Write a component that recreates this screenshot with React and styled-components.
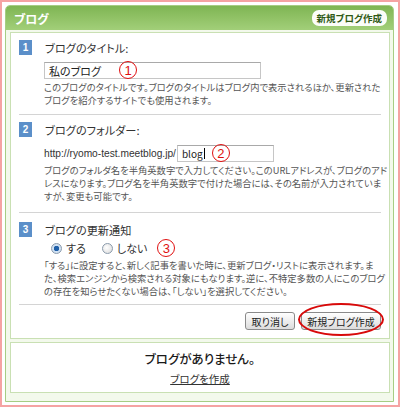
import React from "react";
import styled, { createGlobalStyle } from "styled-components";

const Global = createGlobalStyle`
  html, body { margin: 0; padding: 0; background: #ffffff; }
  body {
    font-family: "Noto Sans CJK JP", "Liberation Sans", sans-serif;
    font-feature-settings: "palt";
  }
`;

const Frame = styled.div`
  box-sizing: border-box;
  width: 400px;
  height: 407px;
  border: 2px solid #f5a3a3;
  padding: 3px 4px 3px 3px;
  background: #ffffff;
`;

const Panel = styled.div`
  box-sizing: border-box;
  height: 100%;
  border: 1px solid #a6cd84;
  border-radius: 5px 5px 0 0;
  background: #f3f9ec;
  display: flex;
  flex-direction: column;
`;

const Header = styled.div`
  height: 24px;
  display: flex;
  align-items: center;
  justify-content: space-between;
  padding: 0 6px 0 8px;
  border-radius: 4px 4px 0 0;
  background: linear-gradient(#7fb553, #a2cf79);
`;

const Title = styled.span`
  color: #ffffff;
  font-size: 12px;
  font-weight: 700;
`;

const HeaderButton = styled.span`
  background: #fbfdf8;
  border-radius: 7px;
  padding: 1px 5px;
  font-size: 9.5px;
  font-weight: 700;
  color: #2f5a14;
  line-height: 14px;
`;

const Body = styled.div`
  padding: 2px 3px 4px 4px;
  display: flex;
  flex-direction: column;
  gap: 3px;
`;

const Box = styled.div`
  background: #ffffff;
  border: 1px solid #c9e0b3;
`;

const Section = styled.div`
  margin: 0 8px;
  padding-top: ${(p) => p.$pt}px;
  padding-bottom: ${(p) => p.$pb}px;
  border-bottom: 1px solid #d4d4d4;
`;

const LabelRow = styled.div`
  display: flex;
  align-items: center;
  gap: 13px;
  height: 15px;
`;

const Badge = styled.span`
  width: 13px;
  height: 15px;
  background: #5b8fc9;
  color: #ffffff;
  font-family: "Liberation Sans", sans-serif;
  font-size: 10px;
  font-weight: 700;
  display: flex;
  align-items: center;
  justify-content: center;
`;

const Label = styled.span`
  font-size: 11.2px;
  color: #333333;
`;

const Content = styled.div`
  padding-left: 25px;
  margin-top: ${(p) => p.$mt}px;
`;

const FieldRow = styled.div`
  display: flex;
  align-items: center;
  height: 17px;
  font-family: "Liberation Sans", "Noto Sans CJK JP", sans-serif;
  font-size: 10.2px;
  color: #333333;
  gap: 1px;
`;

const InputWrap = styled.span`
  position: relative;
  display: inline-flex;
`;

const Field = styled.span`
  box-sizing: border-box;
  display: flex;
  align-items: center;
  width: ${(p) => p.$w}px;
  height: 17px;
  border: 1px solid #c6c6c6;
  border-top-color: #a9a9a9;
  background: #ffffff;
  padding-left: 4px;
  font-family: "Noto Sans CJK JP", "Liberation Sans", sans-serif;
  font-size: ${(p) => p.$fs}px;
  color: #222222;
`;

const Caret = styled.span`
  display: inline-block;
  width: 1px;
  height: 11px;
  background: #000;
  margin-left: 1px;
`;

const Mark = styled.span`
  position: ${(p) => (p.$inline ? "static" : "absolute")};
  left: ${(p) => p.$left}px;
  top: -1px;
  box-sizing: border-box;
  width: 18px;
  height: 18px;
  border: 1.5px solid #e01010;
  border-radius: 50%;
  color: #e01010;
  font-family: "Liberation Sans", sans-serif;
  font-size: 13px;
  display: ${(p) => (p.$inline ? "inline-flex" : "flex")};
  align-items: center;
  justify-content: center;
  margin-left: ${(p) => (p.$inline ? 10 : 0)}px;
`;

const Desc = styled.p`
  margin: ${(p) => p.$mt}px 0 0;
  font-size: 9.3px;
  line-height: 13px;
  color: #555555;
  white-space: nowrap;
`;

const RadioRow = styled.div`
  display: flex;
  align-items: center;
  height: 18px;
  padding-left: 7px;
  font-size: 11px;
  color: #333333;
`;

const Radio = styled.span`
  box-sizing: border-box;
  width: 11px;
  height: 11px;
  border-radius: 50%;
  border: 1px solid #8a9aab;
  background: ${(p) =>
    p.$on
      ? "radial-gradient(circle, #1f5fa8 0 2.5px, #cfe0f2 3px)"
      : "radial-gradient(circle at 40% 40%, #ffffff, #d8d8d8)"};
  margin-right: 4px;
`;

const RadioText = styled.span`
  margin-right: ${(p) => p.$mr}px;
`;

const Actions = styled.div`
  display: flex;
  justify-content: flex-end;
  gap: 6px;
  padding: 7px 8px 8px;
`;

const Button = styled.span`
  box-sizing: border-box;
  display: inline-flex;
  align-items: center;
  justify-content: center;
  width: ${(p) => p.$w}px;
  height: 18px;
  border: 1px solid #8a8a8a;
  border-radius: 3px;
  background: linear-gradient(#ffffff, #dcdcdc);
  font-size: 10px;
  color: #222222;
`;

const Highlight = styled.span`
  position: relative;
  display: inline-flex;
`;

const Ellipse = styled.span`
  position: absolute;
  left: -3px;
  right: -3px;
  top: -9px;
  bottom: -6px;
  border: 2.5px solid #d80a0a;
  border-radius: 50%;
`;

const Empty = styled.div`
  height: 49px;
  display: flex;
  flex-direction: column;
  align-items: center;
  justify-content: center;
  gap: 3px;
`;

const EmptyText = styled.span`
  font-size: 12.5px;
  color: #1a1a1a;
  font-weight: 500;
`;

const EmptyLink = styled.a`
  font-size: 10.5px;
  color: #333333;
  text-decoration: underline;
`;

export default function App() {
  return (
    <>
      <Global />
      <Frame>
        <Panel>
          <Header>
            <Title>ブログ</Title>
            <HeaderButton>新規ブログ作成</HeaderButton>
          </Header>
          <Body>
            <Box>
              <Section $pt={7} $pb={7}>
                <LabelRow>
                  <Badge>1</Badge>
                  <Label>ブログのタイトル:</Label>
                </LabelRow>
                <Content $mt={7}>
                  <FieldRow>
                    <InputWrap>
                      <Field $w={217} $fs={11}>私のブログ</Field>
                      <Mark $left={75}>1</Mark>
                    </InputWrap>
                  </FieldRow>
                  <Desc $mt={2}>
                    このブログのタイトルです。ブログのタイトルはブログ内で表示されるほか、更新された
                    <br />
                    ブログを紹介するサイトでも使用されます。
                  </Desc>
                </Content>
              </Section>
              <Section $pt={7} $pb={9}>
                <LabelRow>
                  <Badge>2</Badge>
                  <Label>ブログのフォルダー:</Label>
                </LabelRow>
                <Content $mt={8}>
                  <FieldRow>
                    http://ryomo-test.meetblog.jp/
                    <InputWrap>
                      <Field $w={97} $fs={10}>
                        blog
                        <Caret />
                      </Field>
                      <Mark $left={35}>2</Mark>
                    </InputWrap>
                  </FieldRow>
                  <Desc $mt={2}>
                    ブログのフォルダ名を半角英数字で入力してください。このURLアドレスが、ブログのアド
                    <br />
                    レスになります。ブログ名を半角英数字で付けた場合には、その名前が入力されていま
                    <br />
                    すが、変更も可能です。
                  </Desc>
                </Content>
              </Section>
              <Section $pt={9} $pb={6}>
                <LabelRow>
                  <Badge>3</Badge>
                  <Label>ブログの更新通知</Label>
                </LabelRow>
                <Content $mt={2}>
                  <RadioRow>
                    <Radio $on />
                    <RadioText $mr={16}>する</RadioText>
                    <Radio />
                    <RadioText $mr={0}>しない</RadioText>
                    <Mark $inline>3</Mark>
                  </RadioRow>
                  <Desc $mt={2}>
                    「する」に設定すると、新しく記事を書いた時に、更新ブログ・リストに表示されます。ま
                    <br />
                    た、検索エンジンから検索される対象にもなります。逆に、不特定多数の人にこのブログ
                    <br />
                    の存在を知らせたくない場合は、「しない」を選択してください。
                  </Desc>
                </Content>
              </Section>
              <Actions>
                <Button $w={50}>取り消し</Button>
                <Highlight>
                  <Button $w={80}>新規ブログ作成</Button>
                  <Ellipse />
                </Highlight>
              </Actions>
            </Box>
            <Box>
              <Empty>
                <EmptyText>ブログがありません。</EmptyText>
                <EmptyLink href="#">ブログを作成</EmptyLink>
              </Empty>
            </Box>
          </Body>
        </Panel>
      </Frame>
    </>
  );
}
